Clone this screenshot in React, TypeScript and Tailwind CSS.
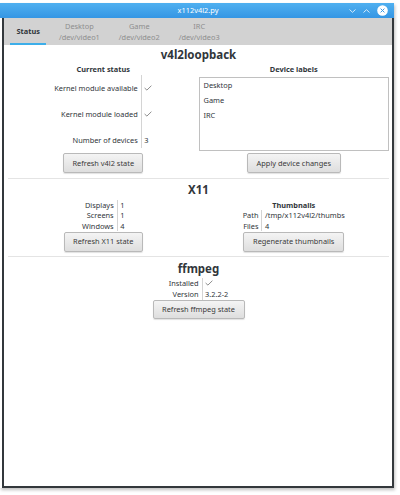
import React from 'react';

const Check = () => (
  <svg width="8" height="6" viewBox="0 0 8 6" className="block">
    <path d="M0.6 3 L2.9 5.1 L7.4 0.7" fill="none" stroke="#707070" strokeWidth="0.8" />
  </svg>
);

const Btn = ({ label, w, h = 'h-[20px]' }: { label: string; w: string; h?: string }) => (
  <div className="flex justify-center">
    <div
      className={`${w} ${h} flex items-center justify-center rounded-[2px] border border-[#b9b9b9] bg-gradient-to-b from-[#f4f4f4] to-[#dedede] text-[#3a3a3a] shadow-[0_1px_1px_rgba(0,0,0,0.12)]`}
    >
      {label}
    </div>
  </div>
);

type Row = [string, React.ReactNode];

// label | thin line | value, the way Qt lays out a QFormLayout here
const Form = ({ rows, rh }: { rows: Row[]; rh: string }) => (
  <div className="mx-auto flex w-fit">
    <div className="flex flex-col items-end pr-[3px]">
      {rows.map(([k]) => (
        <div key={k} className={rh}>{k}</div>
      ))}
    </div>
    <div className="w-px bg-[#d4d4d4]" />
    <div className="flex flex-col pl-[2.5px]">
      {rows.map(([k, v]) => (
        <div key={k} className={`${rh} flex items-center`}>{v}</div>
      ))}
    </div>
  </div>
);

const Tab = ({ top, bottom }: { top: string; bottom: string }) => (
  <div className="flex flex-col items-center justify-center px-[9.5px] leading-[10.5px] text-[#8e8e8e]">
    <span>{top}</span>
    <span>{bottom}</span>
  </div>
);

export default function App() {
  return (
    <div className="h-[495px] w-[400px] overflow-hidden bg-white font-['Noto_Sans',sans-serif] text-[7.4px] text-[#31363b]">
      <div className="mt-[3px] w-[394px] shadow-[1px_2px_3px_rgba(0,0,0,0.25)]">
        {/* title bar */}
        <div className="relative flex h-[15px] items-center justify-center bg-gradient-to-b from-[#4fb0f0] to-[#3596e4] text-white leading-[15px]">
          <span className="ml-[2px]">x112v4l2.py</span>
          <div className="absolute right-[6px] top-0 flex h-[15px] items-center gap-[7px]">
            <svg width="7" height="4" viewBox="0 0 7 4">
              <path d="M0.5 0.5 L3.5 3.3 L6.5 0.5" fill="none" stroke="#e6f3fd" strokeWidth="0.9" />
            </svg>
            <svg width="7" height="4" viewBox="0 0 7 4">
              <path d="M0.5 3.5 L3.5 0.7 L6.5 3.5" fill="none" stroke="#e6f3fd" strokeWidth="0.9" />
            </svg>
            <svg width="11" height="11" viewBox="0 0 11 11">
              <circle cx="5.5" cy="5.5" r="5.3" fill="#ffffff" />
              <path d="M3.6 3.6 L7.4 7.4 M7.4 3.6 L3.6 7.4" stroke="#3a9ae6" strokeWidth="1" />
            </svg>
          </div>
        </div>

        {/* body */}
        <div className="ml-[2px] h-[470px] w-[392px] border-x-2 border-b-2 border-[#33383c]">
          {/* tab bar */}
          <div className="flex h-[27px] bg-[#d2d2d2] pl-[3px]">
            <div className="relative flex items-center px-[9.5px] pt-[1px] font-bold text-[#31363b]">
              Status
              <div className="absolute bottom-[0.5px] left-[3px] right-[3px] h-[2px] bg-[#3daee9]" />
            </div>
            <Tab top="Desktop" bottom="/dev/video1" />
            <Tab top="Game" bottom="/dev/video2" />
            <Tab top="IRC" bottom="/dev/video3" />
          </div>

          <div className="pl-[4px] pr-[3px]">
            {/* v4l2loopback */}
            <section className="border-b border-[#e4e4e4] pb-[4.7px] pt-[2px]">
              <h1 className="text-center text-[11.5px] font-bold leading-[15px]">v4l2loopback</h1>
              <div className="mt-[2px] grid grid-cols-2">
                <div>
                  <h2 className="text-center font-bold leading-[10.5px]">Current status</h2>
                  <div className="h-[76.5px]">
                    <div className="mx-auto flex h-[73px] w-fit">
                      <div className="flex flex-col items-end gap-[15.3px] pr-[3px] pt-[8.5px] leading-[10.5px]">
                        <div>Kernel module available</div>
                        <div>Kernel module loaded</div>
                        <div>Number of devices</div>
                      </div>
                      <div className="w-px bg-[#d4d4d4]" />
                      <div className="flex flex-col gap-[15.3px] pl-[2.5px] pt-[8.5px] leading-[10.5px]">
                        <div className="flex h-[10.5px] items-center"><Check /></div>
                        <div className="flex h-[10.5px] items-center"><Check /></div>
                        <div>3</div>
                      </div>
                    </div>
                  </div>
                  <div className="mt-[2.3px]">
                    <Btn label="Refresh v4l2 state" w="w-[80px]" />
                  </div>
                </div>
                <div>
                  <h2 className="text-center font-bold leading-[10.5px]">Device labels</h2>
                  <div className="h-[76.5px] pt-[2.2px]">
                    <div className="h-[74px] border border-[#c0c0c0] bg-white pl-[4px] leading-[15px]">
                      <div>Desktop</div>
                      <div>Game</div>
                      <div>IRC</div>
                    </div>
                  </div>
                  <div className="mt-[2.3px]">
                    <Btn label="Apply device changes" w="w-[94px]" />
                  </div>
                </div>
              </div>
            </section>

            {/* X11 */}
            <section className="border-b border-[#e4e4e4] pb-[4.7px] pt-[3.5px]">
              <h1 className="text-center text-[11.5px] font-bold leading-[15px]">X11</h1>
              <div className="mt-[2.2px] grid grid-cols-2">
                <div>
                  <Form
                    rh="h-[10.5px] leading-[10.5px]"
                    rows={[
                      ['Displays', '1'],
                      ['Screens', '1'],
                      ['Windows', '4'],
                    ]}
                  />
                  <div className="mt-[0.5px]">
                    <Btn label="Refresh X11 state" w="w-[79px]" />
                  </div>
                </div>
                <div>
                  <h2 className="text-center font-bold leading-[10.5px]">Thumbnails</h2>
                  <Form
                    rh="h-[10.5px] leading-[10.5px]"
                    rows={[
                      ['Path', '/tmp/x112v4l2/thumbs'],
                      ['Files', '4'],
                    ]}
                  />
                  <div className="mt-[0.5px]">
                    <Btn label="Regenerate thumbnails" w="w-[101px]" />
                  </div>
                </div>
              </div>
            </section>

            {/* ffmpeg */}
            <section className="pt-[3.3px]">
              <h1 className="text-center text-[11.5px] font-bold leading-[15px]">ffmpeg</h1>
              <div className="mt-[2px]">
                <Form
                  rh="h-[11px] leading-[11px]"
                  rows={[
                    ['Installed', <Check key="c" />],
                    ['Version', '3.2.2-2'],
                  ]}
                />
              </div>
              <Btn label="Refresh ffmpeg state" w="w-[92px]" h="h-[19px]" />
            </section>
          </div>
        </div>
      </div>
    </div>
  );
}
